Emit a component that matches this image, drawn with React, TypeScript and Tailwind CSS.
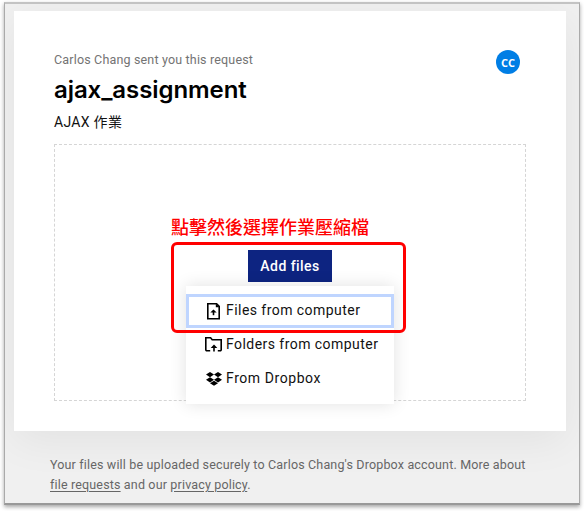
import type { ReactNode } from "react";

function FileUploadIcon() {
  return (
    <svg width="15" height="18" viewBox="0 0 15 18" fill="none" stroke="#000" className="block">
      <path d="M1.8 1.8h8.8l2.6 2.6v12.3H1.8z" strokeWidth="1.6" />
      <path d="M9.8 1.5v3.7h3.6z" fill="#000" stroke="none" />
      <path d="M7.5 13.2V8.8" strokeWidth="1.6" />
      <path d="M4.3 10.6 7.5 7.4l3.2 3.2z" fill="#000" stroke="none" />
    </svg>
  );
}

function FolderUploadIcon() {
  return (
    <svg width="19" height="18" viewBox="0 0 19 18" fill="none" stroke="#000" className="block">
      <path d="M6.2 14.7H2.4l-.6-.8V1.8h4.8l1.6 2h9v10.1l-.6.8h-2.8" strokeWidth="1.6" />
      <path d="M10 15.4V10" strokeWidth="1.6" />
      <path d="M6.7 11.9 10 8.6l3.3 3.3z" fill="#000" stroke="none" />
    </svg>
  );
}

function DropboxIcon() {
  return (
    <svg width="16" height="14" viewBox="0 0 16 14" fill="#000" className="block">
      <path d="M4 0l4 2.6-4 2.6L0 2.6zM12 0l4 2.6-4 2.6-4-2.6zM4 5.2l4 2.6-4 2.6-4-2.6zM12 5.2l4 2.6-4 2.6-4-2.6zM8 8.7l4 2.5L8 13.8l-4-2.6z" />
    </svg>
  );
}

function MenuItem({ icon, children, focused = false }: { icon: ReactNode; children: ReactNode; focused?: boolean }) {
  return (
    <li className={`flex h-[34px] items-center border-[3px] pl-[15px] ${focused ? "border-[#bfd5ff]" : "border-transparent"}`}>
      <span className="flex w-[19px] shrink-0 justify-center">{icon}</span>
      <span className="ml-[3px] pb-[2px] text-[14px] leading-5 tracking-[0.45px] whitespace-nowrap text-[#111]">{children}</span>
    </li>
  );
}

export default function App() {
  return (
    <div className="h-[511px] w-[584px] overflow-hidden bg-white pt-[2px] pl-[4px] font-[Roboto,'Noto_Sans_CJK_TC',sans-serif]">
      <div className="h-[503px] w-[576px] overflow-hidden border-x-[1.5px] border-t-2 border-b-2 border-[#aaa] border-t-[#c3c3c3] border-b-[#999] bg-[#f0f0f0] pt-[7px] pl-[9px] shadow-[0_2px_4px_rgba(0,0,0,0.35)]">
        <main className="h-[420px] w-[552px] bg-white px-10 pt-[39px] shadow-[0_10px_40px_rgba(0,0,0,0.06)]">
          <header className="flex h-[94px] justify-between">
            <div>
              <p className="h-5 text-[12.5px] leading-5 tracking-[0.17px] text-[#737373]">Carlos Chang sent you this request</p>
              <h1 className="mt-[3px] h-[34px] font-[Inter] text-[24px] leading-[34px] font-semibold tracking-[-0.08px] text-black">ajax_assignment</h1>
              <p className="mt-[5px] text-[14px] leading-5 tracking-[0.3px] text-[#111]">AJAX 作業</p>
            </div>
            <div className="mr-1.5 flex size-6 items-center justify-center rounded-full bg-[#007ee5] pt-px font-['Open_Sans'] text-[11px] leading-none font-bold text-white">CC</div>
          </header>
          <section className="relative h-[257px] w-[472px] border border-dashed border-[#d5d5d5] pt-[69px]">
            <p className="ml-[116px] h-6 font-['Noto_Sans_CJK_TC'] text-[18px] leading-6 font-medium whitespace-nowrap text-[#f00]">點擊然後選擇作業壓縮檔</p>
            <button className="mt-3 ml-[193px] block h-8 w-[84px] bg-[#0d2481] text-[14px] leading-8 font-medium tracking-[0.45px] text-white">Add files</button>
            <ul className="absolute top-[141px] left-[131px] h-[118px] w-[208px] bg-white pt-2 shadow-[0_0_16px_rgba(0,0,0,0.12)]">
              <MenuItem icon={<FileUploadIcon />} focused>Files from computer</MenuItem>
              <MenuItem icon={<FolderUploadIcon />}>Folders from computer</MenuItem>
              <MenuItem icon={<DropboxIcon />}>
                <span className="tracking-[0.57px]">From Dropbox</span>
              </MenuItem>
            </ul>
            <div className="pointer-events-none absolute top-[96.5px] left-[116px] h-[91px] w-[235px] rounded-[6px] border-[3px] border-[#f00]" />
          </section>
        </main>
        <footer className="mt-6 ml-9 text-[12.5px] leading-5 tracking-[0.16px] whitespace-nowrap text-[#666]">
          <p>Your files will be uploaded securely to Carlos Chang's Dropbox account. More about</p>
          <p>
            <a className="underline underline-offset-2">file requests</a> and our <a className="underline underline-offset-2">privacy policy</a>.
          </p>
        </footer>
      </div>
    </div>
  );
}
